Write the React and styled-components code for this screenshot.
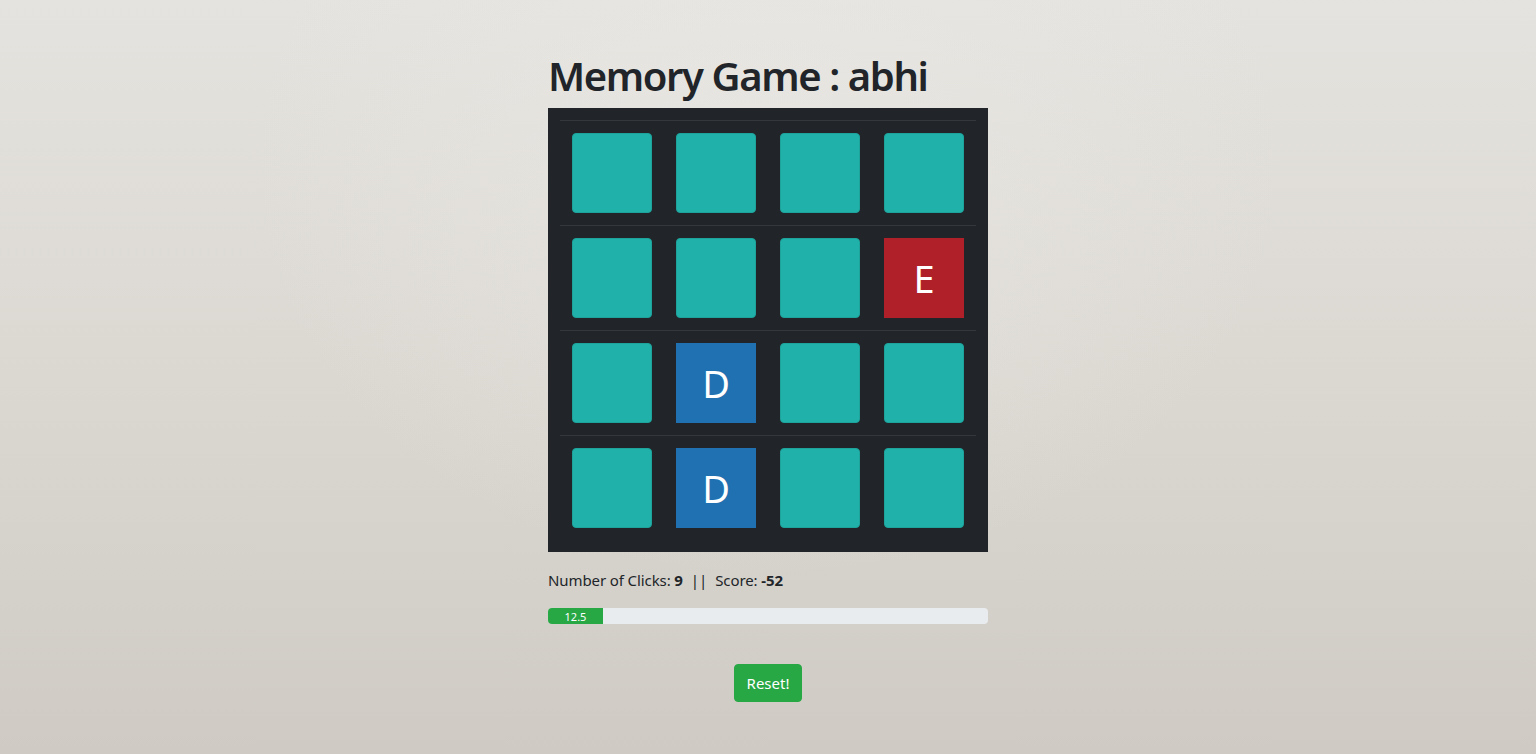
import React from "react";
import styled, { createGlobalStyle } from "styled-components";

const CARD_SIZE = 80;

const GlobalStyle = createGlobalStyle`
  html, body {
    margin: 0;
    min-height: 100%;
  }
  body {
    font-family: "Noto Sans", "Open Sans", sans-serif;
    color: #212529;
    background:
      radial-gradient(ellipse 520px 420px at 50% 160px, rgba(236, 234, 230, 0.55), rgba(236, 234, 230, 0) 100%),
      linear-gradient(180deg, #e5e3df 0%, #dbd8d2 50%, #cfcbc4 100%);
    min-height: 754px;
  }
`;

const Page = styled.div`
  width: 440px;
  margin: 0 auto;
  padding-top: 52px;
  display: flex;
  flex-direction: column;
`;

const Title = styled.h1`
  margin: 0 0 8px;
  font-size: 40px;
  font-weight: 600;
  line-height: 48px;
  letter-spacing: -1.4px;
`;

const Board = styled.div`
  background: #212529;
  padding: 12px;
`;

const BoardRow = styled.div`
  display: grid;
  grid-template-columns: repeat(4, 1fr);
  border-top: 1px solid #32383e;
`;

const Cell = styled.div`
  padding: 12px;
`;

const Card = styled.div`
  width: ${CARD_SIZE}px;
  height: ${CARD_SIZE}px;
  box-sizing: border-box;
  display: flex;
  align-items: center;
  justify-content: center;
  color: #fff;
  font-size: 38px;
  line-height: 1;
  background: ${({ $color }) => $color || "#20b2aa"};
  border: ${({ $color }) => ($color ? "none" : "1px solid #1ea39c")};
  border-radius: ${({ $color }) => ($color ? "0" : "4px")};
`;

const Stats = styled.p`
  margin: 16px 0 16px;
  font-size: 15px;
  line-height: 24px;
  letter-spacing: -0.1px;
`;

const Sep = styled.span`
  margin: 0 8px;
  color: #212529;
`;

const Progress = styled.div`
  height: 16px;
  display: flex;
  background: #e9ecef;
  border-radius: 4px;
  overflow: hidden;
`;

const ProgressBar = styled.div`
  background: #28a745;
  color: #fff;
  font-size: 11px;
  display: flex;
  align-items: center;
  justify-content: center;
`;

const ButtonRow = styled.div`
  display: flex;
  justify-content: center;
  margin-top: 40px;
`;

const ResetButton = styled.button`
  background: #28a745;
  color: #fff;
  border: 1px solid #28a745;
  border-radius: 4px;
  height: 38px;
  padding: 0 12px;
  font-family: inherit;
  font-size: 15px;
  cursor: pointer;
`;

const cards = [
  [null, null, null, null],
  [null, null, null, { letter: "E", color: "#b02028" }],
  [null, { letter: "D", color: "#2071b1" }, null, null],
  [null, { letter: "D", color: "#2071b1" }, null, null],
];

const progress = 12.5;

export default function App() {
  return (
    <>
      <GlobalStyle />
      <Page>
        <Title>Memory Game : abhi</Title>
        <Board>
          {cards.map((row, r) => (
            <BoardRow key={r}>
              {row.map((card, c) => (
                <Cell key={c}>
                  <Card $color={card?.color}>{card?.letter}</Card>
                </Cell>
              ))}
            </BoardRow>
          ))}
        </Board>
        <Stats>
          Number of Clicks: <b>9</b>
          <Sep>||</Sep>
          Score: <b>-52</b>
        </Stats>
        <Progress>
          <ProgressBar style={{ width: `${progress}%` }}>{progress}</ProgressBar>
        </Progress>
        <ButtonRow>
          <ResetButton>Reset!</ResetButton>
        </ButtonRow>
      </Page>
    </>
  );
}
